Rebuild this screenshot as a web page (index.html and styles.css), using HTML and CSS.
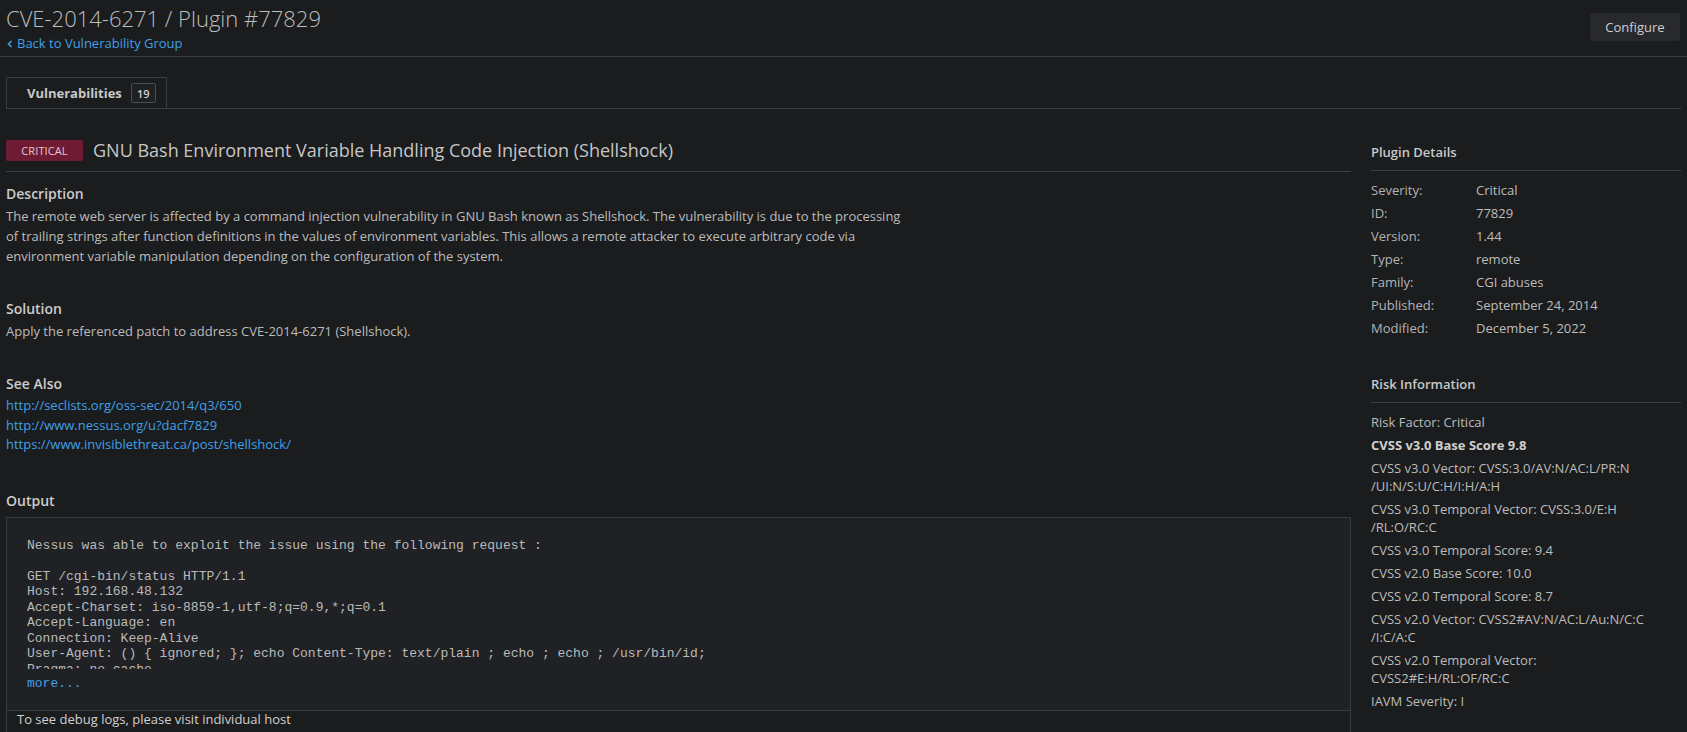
FILE: index.html
```html
<!DOCTYPE html>
<html>
<head>
<meta charset="utf-8">
<title>CVE-2014-6271 / Plugin #77829</title>
<link rel="stylesheet" href="styles.css">
</head>
<body>
<header class="page-header">
  <div class="header-left">
    <h1 class="page-title">CVE-2014-6271 / Plugin #77829</h1>
    <a class="back-link" href="#"><svg class="chev" width="6" height="8" viewBox="0 0 6 8"><path d="M4.5 1 L1.5 4 L4.5 7" fill="none" stroke="currentColor" stroke-width="1.6"/></svg>Back to Vulnerability Group</a>
  </div>
  <button class="btn-configure">Configure</button>
</header>

<div class="content">
  <div class="tabs">
    <div class="tab active">Vulnerabilities <span class="tab-count">19</span></div>
  </div>

  <div class="layout">
    <main class="main-col">
      <div class="vuln-head">
        <span class="sev-badge">CRITICAL</span>
        <h2 class="vuln-title">GNU Bash Environment Variable Handling Code Injection (Shellshock)</h2>
      </div>

      <section class="section">
        <h3 class="section-title">Description</h3>
        <p class="section-text desc">The remote web server is affected by a command injection vulnerability in GNU Bash known as Shellshock. The vulnerability is due to the processing of trailing strings after function definitions in the values of environment variables. This allows a remote attacker to execute arbitrary code via environment variable manipulation depending on the configuration of the system.</p>
      </section>

      <section class="section">
        <h3 class="section-title">Solution</h3>
        <p class="section-text">Apply the referenced patch to address CVE-2014-6271 (Shellshock).</p>
      </section>

      <section class="section">
        <h3 class="section-title">See Also</h3>
        <div class="links">
          <a href="#">http://seclists.org/oss-sec/2014/q3/650</a>
          <a href="#">http://www.nessus.org/u?dacf7829</a>
          <a href="#">https://www.invisiblethreat.ca/post/shellshock/</a>
        </div>
      </section>

      <section class="section output-section">
        <h3 class="section-title">Output</h3>
        <div class="output-box">
          <div class="output-body">
<pre class="output-pre">Nessus was able to exploit the issue using the following request :

GET /cgi-bin/status HTTP/1.1
Host: 192.168.48.132
Accept-Charset: iso-8859-1,utf-8;q=0.9,*;q=0.1
Accept-Language: en
Connection: Keep-Alive
User-Agent: () { ignored; }; echo Content-Type: text/plain ; echo ; echo ; /usr/bin/id;
Pragma: no-cache</pre>
            <a class="more-link" href="#">more...</a>
          </div>
          <div class="output-footer">To see debug logs, please visit individual host</div>
        </div>
      </section>
    </main>

    <aside class="side-col">
      <h3 class="side-title">Plugin Details</h3>
      <table class="details">
        <tr><td class="k">Severity:</td><td class="v">Critical</td></tr>
        <tr><td class="k">ID:</td><td class="v">77829</td></tr>
        <tr><td class="k">Version:</td><td class="v">1.44</td></tr>
        <tr><td class="k">Type:</td><td class="v">remote</td></tr>
        <tr><td class="k">Family:</td><td class="v">CGI abuses</td></tr>
        <tr><td class="k">Published:</td><td class="v">September 24, 2014</td></tr>
        <tr><td class="k">Modified:</td><td class="v">December 5, 2022</td></tr>
      </table>

      <h3 class="side-title risk-title">Risk Information</h3>
      <ul class="risk-list">
        <li>Risk Factor: Critical</li>
        <li class="strong">CVSS v3.0 Base Score 9.8</li>
        <li>CVSS v3.0 Vector: CVSS:3.0/AV:N/AC:L/PR:N<br>/UI:N/S:U/C:H/I:H/A:H</li>
        <li>CVSS v3.0 Temporal Vector: CVSS:3.0/E:H<br>/RL:O/RC:C</li>
        <li>CVSS v3.0 Temporal Score: 9.4</li>
        <li>CVSS v2.0 Base Score: 10.0</li>
        <li>CVSS v2.0 Temporal Score: 8.7</li>
        <li>CVSS v2.0 Vector: CVSS2#AV:N/AC:L/Au:N/C:C<br>/I:C/A:C</li>
        <li>CVSS v2.0 Temporal Vector:<br>CVSS2#E:H/RL:OF/RC:C</li>
        <li>IAVM Severity: I</li>
      </ul>
    </aside>
  </div>
</div>
</body>
</html>
```

FILE: styles.css
```css
* { box-sizing: border-box; }

html, body {
  margin: 0;
  padding: 0;
  background: #1b1c1e;
  color: #bcbcbc;
  font-family: "Open Sans", "Noto Sans", sans-serif;
  font-size: 13px;
  height: 100%;
  overflow: hidden;
}

a { color: #3fa0e8; text-decoration: none; }

.page-header {
  display: flex;
  justify-content: space-between;
  align-items: flex-start;
  padding: 2px 6px 3px 6px;
  border-bottom: 1px solid #3d3e41;
}

.page-title {
  margin: 0;
  font-size: 22px;
  font-weight: 300;
  line-height: 32px;
  color: #bdbdbd;
}

.back-link {
  display: flex;
  align-items: center;
  gap: 4px;
  font-size: 13px;
  line-height: 19px;
  padding-left: 1px;
}

.chev { display: block; }

.btn-configure {
  margin-top: 11px;
  margin-right: 1px;
  width: 90px;
  height: 28px;
  border: 0;
  border-radius: 3px;
  background: #28292c;
  color: #cfcfcf;
  font-family: "Open Sans", sans-serif;
  font-size: 13px;
}

.content {
  padding: 0 6px;
}

.tabs {
  margin-top: 20px;
  border-bottom: 1px solid #3d3e41;
  display: flex;
}

.tab {
  width: 161px;
  height: 31px;
  border: 1px solid #3d3e41;
  border-bottom: 0;
  border-radius: 2px 2px 0 0;
  display: flex;
  align-items: center;
  gap: 9px;
  padding-left: 20px;
  font-weight: 700;
  font-size: 13px;
  color: #c8c8c8;
}

.tab-count {
  display: inline-flex;
  align-items: center;
  justify-content: center;
  width: 25px;
  height: 20px;
  border: 1px solid #4c4d50;
  border-radius: 2px;
  background: #1f2023;
  font-size: 11px;
  font-weight: 600;
  color: #cfcfcf;
}

.layout {
  display: grid;
  grid-template-columns: 1345px 1fr;
  column-gap: 20px;
  margin-top: 21px;
}

.vuln-head {
  display: flex;
  align-items: center;
  gap: 10px;
  padding: 9px 0 10px;
  border-bottom: 1px solid #3d3e41;
}

.sev-badge {
  display: inline-flex;
  align-items: center;
  justify-content: center;
  width: 77px;
  height: 21px;
  border-radius: 2px;
  background: #6e1b33;
  color: #e3c9cf;
  font-size: 11px;
  letter-spacing: 0.1px;
}

.vuln-title {
  margin: 0;
  font-size: 18px;
  font-weight: 400;
  line-height: 22px;
  color: #c6c6c6;
}

.section { margin-top: 12px; }
.section + .section { margin-top: 33px; }

.section-title {
  margin: 0 0 2px;
  font-size: 14px;
  font-weight: 600;
  line-height: 20px;
  color: #cbcbcb;
}

.section-text {
  margin: 0;
  line-height: 20px;
  color: #bcbcbc;
}

.desc { max-width: 900px; }

.links {
  display: flex;
  flex-direction: column;
  align-items: flex-start;
  line-height: 19.5px;
  padding-bottom: 3px;
}

.output-section .section-title { margin-bottom: 6px; }

.output-box {
  border: 1px solid #3a3b3e;
  background: #202124;
}

.output-body {
  padding: 20px 20px 19px;
}

.output-pre {
  margin: 0;
  font-family: "Liberation Mono", "Courier New", monospace;
  font-size: 13px;
  line-height: 15.5px;
  color: #bababa;
  max-height: 131px;
  overflow: hidden;
  white-space: pre;
}

.more-link {
  display: block;
  margin-top: 7px;
  font-family: "Liberation Mono", "Courier New", monospace;
  font-size: 13px;
  line-height: 15.5px;
}

.output-footer {
  border-top: 1px solid #3a3b3e;
  background: #1b1c1e;
  padding: 0 10px 6px;
  line-height: 16px;
  font-family: "Open Sans", sans-serif;
  font-size: 13px;
  color: #d0d0d0;
}

.side-title {
  margin: 0;
  padding: 13px 0 9px;
  font-size: 13px;
  font-weight: 600;
  line-height: 18px;
  color: #c8c8c8;
  border-bottom: 1px solid #3d3e41;
}

.details {
  border-collapse: collapse;
  margin-top: 8px;
}

.details td {
  padding: 0;
  line-height: 23px;
  font-size: 13px;
}

.details .k { width: 105px; color: #b4b4b4; }
.details .v { color: #bcbcbc; }

.risk-title { margin-top: 22px; }

.risk-list {
  list-style: none;
  margin: 0;
  padding: 10px 0 0;
}

.risk-list li {
  line-height: 18px;
  margin-bottom: 5px;
  color: #bcbcbc;
}

.risk-list li.strong { font-weight: 700; color: #cfcfcf; }
```
